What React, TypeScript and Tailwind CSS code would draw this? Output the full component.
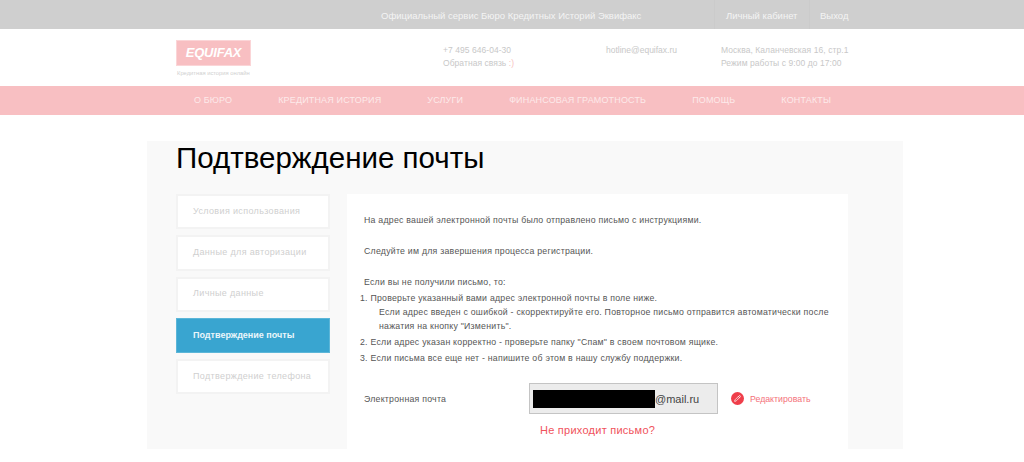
import { Pencil } from "lucide-react"

const navItems = ["О БЮРО", "КРЕДИТНАЯ ИСТОРИЯ", "УСЛУГИ", "ФИНАНСОВАЯ ГРАМОТНОСТЬ", "ПОМОЩЬ", "КОНТАКТЫ"]

const steps = [
  { label: "Условия использования" },
  { label: "Данные для авторизации" },
  { label: "Личные данные" },
  { label: "Подтверждение почты", active: true },
  { label: "Подтверждение телефона" },
]

export default function App() {
  return (
    <div className="h-[462px] overflow-hidden bg-white font-['Liberation_Sans',Arial,sans-serif]">
      <div className="h-[29px] bg-[#cfcfcf] text-[9.5px] text-[#f4f4f4]">
        <div className="flex h-full pl-[381px]">
          <div className="w-[333px] pt-[9px]">Официальный сервис Бюро Кредитных Историй Эквифакс</div>
          <div className="w-[95px] border-l border-[#cbcbcb] pl-[11px] pt-[9px]">Личный кабинет</div>
          <div className="border-l border-[#cbcbcb] pl-[10px] pt-[9px]">Выход</div>
        </div>
      </div>

      <header className="flex h-[57px] pl-[176px] text-[8.5px] leading-[12px] text-[#c8c8c8]">
        <div className="w-[267px] pt-[11px]">
          <div className="flex h-[26px] w-[75px] items-center justify-center border border-[#fbd5d7] bg-[#f8bfc2] text-[13px] font-bold italic tracking-[-0.2px] text-white">
            EQUIFAX
          </div>
          <div className="mt-[3px] whitespace-nowrap pl-[1px] text-[5.8px] leading-[8px] text-[#d0d0d0]">Кредитная история онлайн</div>
        </div>
        <div className="w-[163px] pt-[15px] tracking-[0.05px]">
          <div>+7 495 646-04-30</div>
          <div className="mt-[1px]">
            Обратная связь <span className="text-[#f8bfc2]">:)</span>
          </div>
        </div>
        <div className="w-[115px] pt-[15px]">hotline@equifax.ru</div>
        <div className="pt-[15px] tracking-[0.07px]">
          <div>Москва, Каланчевская 16, стр.1</div>
          <div className="mt-[1px]">Режим работы с 9:00 до 17:00</div>
        </div>
      </header>

      <nav className="flex h-[29px] items-center gap-[46px] bg-[#f8bfc2] pl-[194px] text-[9px] tracking-[0.15px] text-[#fdeaea]">
        {navItems.map((item) => (
          <span key={item}>{item}</span>
        ))}
      </nav>

      <main className="ml-[147px] mt-[26px] h-[308px] w-[756px] bg-[#f9f9f9] pl-[29px] pr-[55px]">
        <h1 className="text-[29.5px] leading-[34px] text-black">Подтверждение почты</h1>
        <div className="mt-[19px] flex gap-[17px]">
          <div className="flex w-[154px] flex-col gap-[6px]">
            {steps.map((step) => (
              <div
                key={step.label}
                className={
                  step.active
                    ? "flex h-[35.25px] items-center border border-[#5cb6d8] bg-[#39a5d0] pl-[16px] text-[9px] font-bold text-[#eaf6fb]"
                    : "flex h-[35.25px] items-center border-2 border-[#f3f3f3] bg-white pl-[15px] text-[9px] tracking-[0.35px] text-[#cfcfcf]"
                }
              >
                {step.label}
              </div>
            ))}
          </div>

          <div className="h-[255px] flex-1 bg-white pl-[17px] pt-[20px] text-[8.75px] leading-[12px] tracking-[0.24px] text-[#555]">
            <p>На адрес вашей электронной почты было отправлено письмо с инструкциями.</p>
            <p className="mt-[19px]">Следуйте им для завершения процесса регистрации.</p>
            <p className="mt-[19px]">Если вы не получили письмо, то:</p>
            <ol className="-ml-[4px] mt-[4px]">
              <li>
                1. Проверьте указанный вами адрес электронной почты в поле ниже.
                <div className="mt-[1px] whitespace-nowrap pl-[19px] leading-[14px]">
                  Если адрес введен с ошибкой - скорректируйте его. Повторное письмо отправится автоматически после
                  <br />
                  нажатия на кнопку "Изменить".
                </div>
              </li>
              <li className="mt-[3px]">2. Если адрес указан корректно - проверьте папку "Спам" в своем почтовом ящике.</li>
              <li className="mt-[4px]">3. Если письма все еще нет - напишите об этом в нашу службу поддержки.</li>
            </ol>

            <div className="mt-[19px] flex items-center">
              <span className="w-[165px]">Электронная почта</span>
              <div className="flex h-[31px] w-[189px] items-center border border-[#c4c4c4] bg-[#ececec] pl-[3px] text-[11px] tracking-normal text-[#444]">
                <span className="h-[18px] w-[122px] bg-black" />
                <span>@mail.ru</span>
              </div>
              <div className="ml-[13px] flex h-[13px] w-[13px] items-center justify-center rounded-full bg-[#ef3e4a]">
                <Pencil size={7} color="#ffffff" strokeWidth={2.5} />
              </div>
              <span className="ml-[6px] tracking-normal text-[#f4717a]">Редактировать</span>
            </div>
            <div className="ml-[176px] mt-[9px] text-[11px] leading-[14px] tracking-[0.25px] text-[#f0525c]">Не приходит письмо?</div>
          </div>
        </div>
      </main>
    </div>
  )
}
